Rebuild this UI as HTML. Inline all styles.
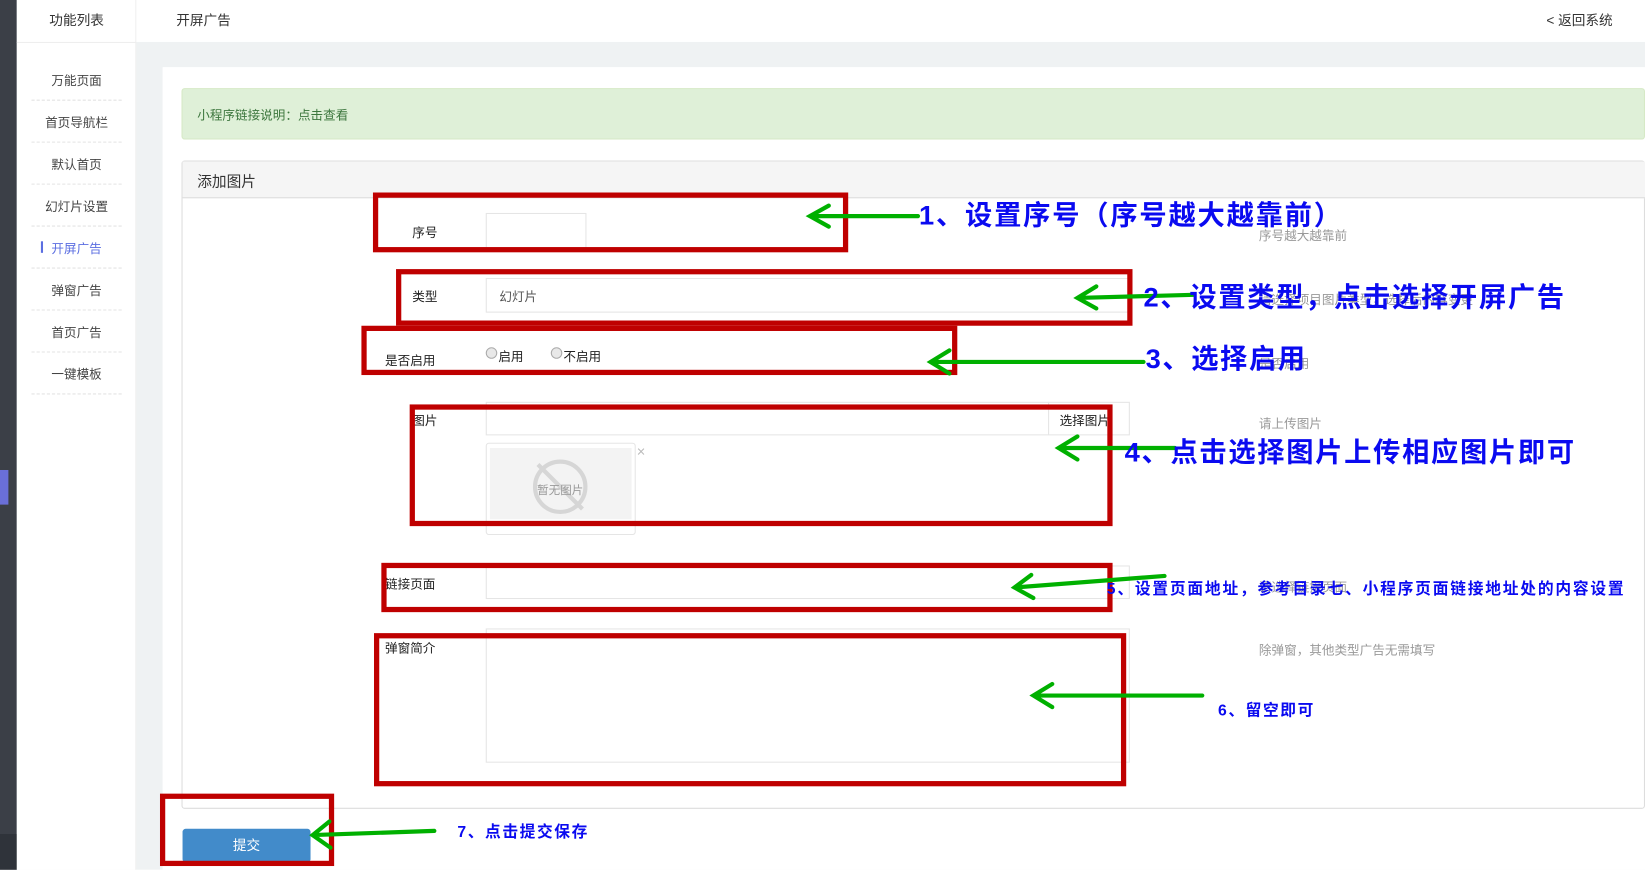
<!DOCTYPE html>
<html><head><meta charset="utf-8"><style>
*{margin:0;padding:0;box-sizing:border-box}
html,body{width:1645px;height:870px;overflow:hidden;background:#fff;font-family:"Liberation Sans","Noto Sans CJK SC",sans-serif}
#w{position:absolute;left:0;top:0;width:1568px;height:829px;transform:scale(1.0491);transform-origin:0 0;background:#eff2f3;font-size:12px;color:#333}
.a{position:absolute;white-space:nowrap}
.inp{position:absolute;border:1px solid #e5e5e5;background:#fff}
.lb{position:absolute;font-size:12px;color:#222}
.hp{position:absolute;font-size:12px;color:#999}
.bl{position:absolute;color:#0a0af0;font-weight:bold;white-space:nowrap}
.mi{position:absolute;left:30px;width:86px;text-align:center;font-size:12px;color:#444}
.sep{position:absolute;left:30px;width:86px;border-top:1px dashed #e3e3e3}
</style></head><body><div id="w">
<div class="a" style="left:0;top:0;width:16px;height:829px;background:#3b3f47"></div>
<div class="a" style="left:0;top:795px;width:16px;height:34px;background:#2f333a"></div>
<div class="a" style="left:0;top:448px;width:8px;height:33px;background:#6a6fd8"></div>
<div class="a" style="left:16px;top:0;width:114px;height:829px;background:#fff;border-right:1px solid #eee"></div>
<div class="a" style="left:130px;top:0;width:1438px;height:40px;background:#fff"></div>
<div class="a" style="left:16px;top:40px;width:114px;border-top:1px solid #eee"></div>
<div class="a" style="left:47px;top:9px;font-size:13px;color:#333">功能列表</div>
<div class="a" style="left:168px;top:9px;font-size:13px;color:#333">开屏广告</div>
<div class="a" style="left:1474px;top:9px;font-size:13px;color:#333">&lt; 返回系统</div>
<div class="mi" style="top:68px">万能页面</div><div class="sep" style="top:95px"></div>
<div class="mi" style="top:108px">首页导航栏</div><div class="sep" style="top:135px"></div>
<div class="mi" style="top:148px">默认首页</div><div class="sep" style="top:175px"></div>
<div class="mi" style="top:188px">幻灯片设置</div><div class="sep" style="top:215px"></div>
<div class="mi" style="top:228px;color:#5b6ee1">开屏广告</div><div class="a" style="left:39px;top:230px;width:2px;height:11px;background:#5b6ee1"></div><div class="sep" style="top:255px"></div>
<div class="mi" style="top:268px">弹窗广告</div><div class="sep" style="top:295px"></div>
<div class="mi" style="top:308px">首页广告</div><div class="sep" style="top:335px"></div>
<div class="mi" style="top:348px">一键模板</div><div class="sep" style="top:375px"></div>

<div class="a" style="left:155px;top:64px;width:1413px;height:765px;background:#fff"></div>
<div class="a" style="left:173px;top:84px;width:1395px;height:49px;background:#dff0d8;border:1px solid #d6e9c6;border-radius:3px"></div>
<div class="a" style="left:188px;top:101px;font-size:12px;color:#3c763d">小程序链接说明：点击查看</div>
<div class="a" style="left:173px;top:153px;width:1395px;height:618px;border:1px solid #ddd;border-radius:3px"></div>
<div class="a" style="left:174px;top:154px;width:1394px;height:35px;background:#f5f5f5;border-bottom:1px solid #ddd"></div>
<div class="a" style="left:188px;top:163px;font-size:14px;color:#333">添加图片</div>

<div class="lb" style="left:393px;top:213px">序号</div>
<div class="inp" style="left:463px;top:203px;width:96px;height:34px"></div>
<div class="hp" style="left:1200px;top:216px">序号越大越靠前</div>
<div class="lb" style="left:393px;top:274px">类型</div>
<div class="inp" style="left:463px;top:265px;width:614px;height:33px"></div>
<div class="a" style="left:476px;top:274px;color:#555">幻灯片</div>
<div class="hp" style="left:1200px;top:277px">请选择项目图片类型，选择后内容变更</div>
<div class="lb" style="left:367px;top:335px">是否启用</div>
<div class="a" style="left:463px;top:331px;width:11px;height:11px;border:1px solid #aaa;border-radius:50%;background:#e8e8e8"></div>
<div class="a" style="left:475px;top:331px;color:#222">启用</div>
<div class="a" style="left:525px;top:331px;width:11px;height:11px;border:1px solid #aaa;border-radius:50%;background:#e8e8e8"></div>
<div class="a" style="left:537px;top:331px;color:#222">不启用</div>
<div class="hp" style="left:1200px;top:338px">是否启用</div>
<div class="lb" style="left:393px;top:392px">图片</div>
<div class="inp" style="left:463px;top:383px;width:537px;height:32px"></div>
<div class="inp" style="left:999px;top:383px;width:78px;height:32px;background:#fff"></div>
<div class="a" style="left:1010px;top:392px;color:#222">选择图片</div>
<div class="hp" style="left:1200px;top:395px">请上传图片</div>
<div class="a" style="left:463px;top:422px;width:143px;height:88px;border:1px solid #e5e5e5;border-radius:3px"></div>
<div class="a" style="left:467px;top:427px;width:135px;height:68px;background:#f3f3f3"></div>
<div class="a" style="left:508px;top:438px;width:52px;height:52px;border:4px solid #d6d6d6;border-radius:50%"></div>
<div class="a" style="left:532px;top:434px;width:4px;height:60px;background:#d6d6d6;transform:rotate(-45deg)"></div>
<div class="a" style="left:512px;top:459px;font-size:11px;color:#999">暂无图片</div>
<div class="a" style="left:607px;top:422px;font-size:14px;color:#bbb">×</div>
<div class="lb" style="left:367px;top:548px">链接页面</div>
<div class="inp" style="left:463px;top:539px;width:614px;height:32px"></div>
<div class="hp" style="left:1200px;top:551px">请选择链接页面</div>
<div class="lb" style="left:367px;top:609px">弹窗简介</div>
<div class="inp" style="left:463px;top:599px;width:614px;height:128px"></div>
<div class="hp" style="left:1200px;top:611px">除弹窗，其他类型广告无需填写</div>
<div class="a" style="left:174px;top:790px;width:122px;height:32px;background:#428bca;border-radius:3px;color:#fff;text-align:center;line-height:32px;font-size:13px">提交</div>

<svg class="a" style="left:0;top:0" width="1568" height="829">
<g fill="none" stroke="#bf0000" stroke-width="5">
<rect x="358" y="186" width="448" height="52"/>
<rect x="380" y="259" width="697" height="49"/>
<rect x="347" y="313" width="563" height="42"/>
<rect x="393" y="388" width="665" height="111"/>
<rect x="366" y="539" width="692" height="42"/>
<rect x="359" y="606" width="712" height="141"/>
<rect x="155" y="759" width="161" height="64"/>
</g>
<g fill="none" stroke="#00b000" stroke-width="4" stroke-linecap="round">
<path d="M875 206H772M790 196L772 206L790 216"/>
<path d="M1138 281L1027 284M1045 273L1027 284L1045 294"/>
<path d="M1090 345H887M905 334L887 345L905 356"/>
<path d="M1120 427H1009M1027 416L1009 427L1027 438"/>
<path d="M1110 549L967 560M983 548L967 560L985 570"/>
<path d="M1146 663H985M1003 652L985 663L1003 674"/>
<path d="M414 792L298 796M314 783L298 796L315 808"/>
</g>
</svg>
<div class="bl" style="left:876px;top:185px;font-size:26px;letter-spacing:1.7px">1、设置序号（序号越大越靠前）</div>
<div class="bl" style="left:1090px;top:263px;font-size:26px;letter-spacing:1.6px">2、设置类型，点击选择开屏广告</div>
<div class="bl" style="left:1092px;top:322px;font-size:26px;letter-spacing:1.5px">3、选择启用</div>
<div class="bl" style="left:1072px;top:411px;font-size:26px;letter-spacing:1.6px">4、点击选择图片上传相应图片即可</div>
<div class="bl" style="left:1055px;top:550px;font-size:15px;letter-spacing:1.7px">5、设置页面地址，参考目录七、小程序页面链接地址处的内容设置</div>
<div class="bl" style="left:1161px;top:666px;font-size:15px;letter-spacing:1.5px">6、留空即可</div>
<div class="bl" style="left:436px;top:782px;font-size:15px;letter-spacing:1.5px">7、点击提交保存</div>
</div></body></html>
